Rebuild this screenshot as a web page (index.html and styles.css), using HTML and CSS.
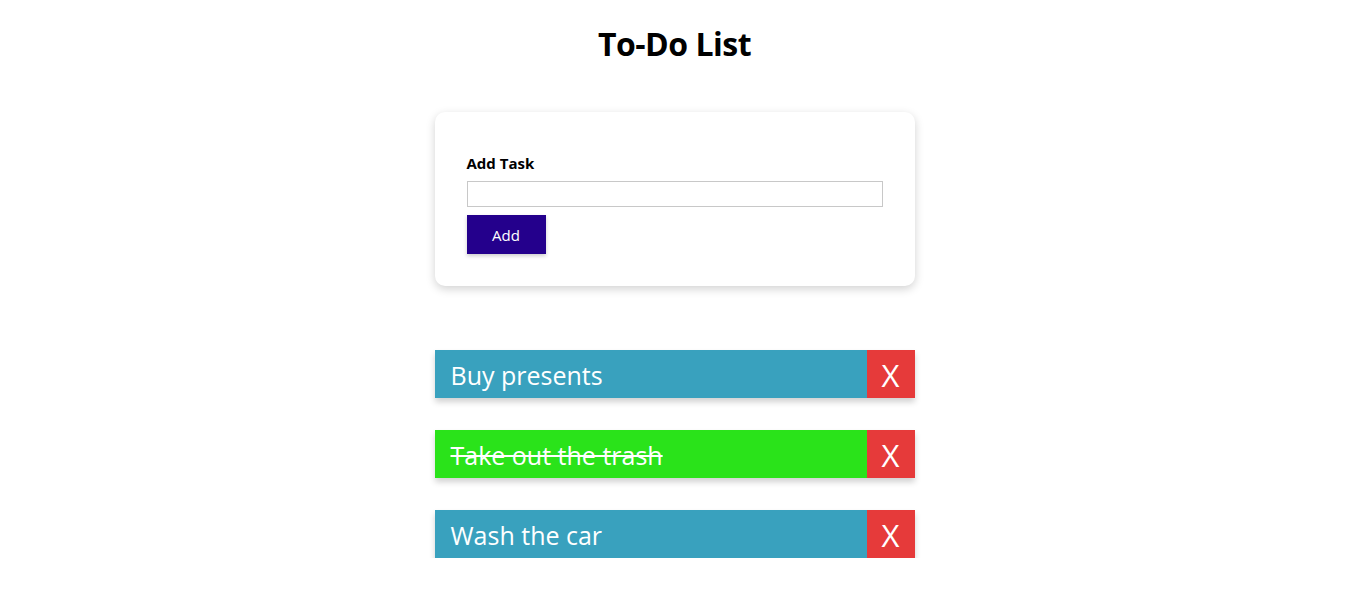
FILE: index.html
```html
<!DOCTYPE html>
<html lang="en">
<head>
<meta charset="utf-8">
<title>To-Do List</title>
<link rel="stylesheet" href="styles.css">
</head>
<body>
<main class="app">
  <h1 class="title">To-Do List</h1>
  <section class="card">
    <form class="add-form">
      <label class="label" for="task">Add Task</label>
      <input class="input" id="task" type="text">
      <button class="btn-add" type="button">Add</button>
    </form>
  </section>
  <ul class="tasks">
    <li class="task">
      <span class="task-text">Buy presents</span>
      <button class="task-del" type="button">X</button>
    </li>
    <li class="task task-done">
      <span class="task-text">Take out the trash</span>
      <button class="task-del" type="button">X</button>
    </li>
    <li class="task">
      <span class="task-text">Wash the car</span>
      <button class="task-del" type="button">X</button>
    </li>
  </ul>
</main>
</body>
</html>
```
FILE: styles.css
```css
* { box-sizing: border-box; }
html, body { margin: 0; padding: 0; background: #fff; }
body {
  font-family: "Open Sans", "Noto Sans", "Liberation Sans", sans-serif;
  color: #000;
}
.app {
  display: flex;
  flex-direction: column;
  align-items: center;
}
.title {
  margin: 20px 0 0;
  font-size: 32px;
  line-height: 48px;
  font-weight: 700;
  letter-spacing: -0.5px;
}
.card {
  margin-top: 44px;
  width: 480px;
  background: #fff;
  border-radius: 10px;
  box-shadow: 0 3px 10px rgba(0,0,0,0.18);
  padding: 41px 32px 32px;
}
.add-form {
  display: flex;
  flex-direction: column;
  align-items: flex-start;
  gap: 8px;
}
.label {
  font-size: 15px;
  font-weight: 700;
  line-height: 20px;
  letter-spacing: 0;
}
.input {
  width: 100%;
  height: 26px;
  border: 1px solid #c8c8c8;
  padding: 2px 4px;
  font: inherit;
  outline: none;
}
.btn-add {
  width: 79px;
  height: 39px;
  border: none;
  background: #24008c;
  color: #fff;
  font-family: inherit;
  font-size: 15px;
  box-shadow: 0 2px 4px rgba(0,0,0,0.2);
  cursor: pointer;
}
.tasks {
  list-style: none;
  margin: 64px 0 0;
  padding: 0;
  width: 480px;
  display: flex;
  flex-direction: column;
  gap: 32px;
}
.task {
  display: flex;
  height: 48px;
  background: #39a1be;
  box-shadow: 0 4px 6px rgba(0,0,0,0.18);
}
.task-done { background: #2ae31a; }
.task-text {
  flex: 1;
  display: flex;
  align-items: center;
  padding: 2px 0 0 16px;
  color: #fff;
  font-size: 25px;
  letter-spacing: 0;
}
.task-done .task-text { text-decoration: line-through; text-decoration-thickness: 2px; }
.task-del {
  width: 48px;
  height: 48px;
  border: none;
  background: #e63a3a;
  color: #fff;
  font-family: inherit;
  font-size: 31px;
  padding: 2px 0 0;
  cursor: pointer;
}
```
